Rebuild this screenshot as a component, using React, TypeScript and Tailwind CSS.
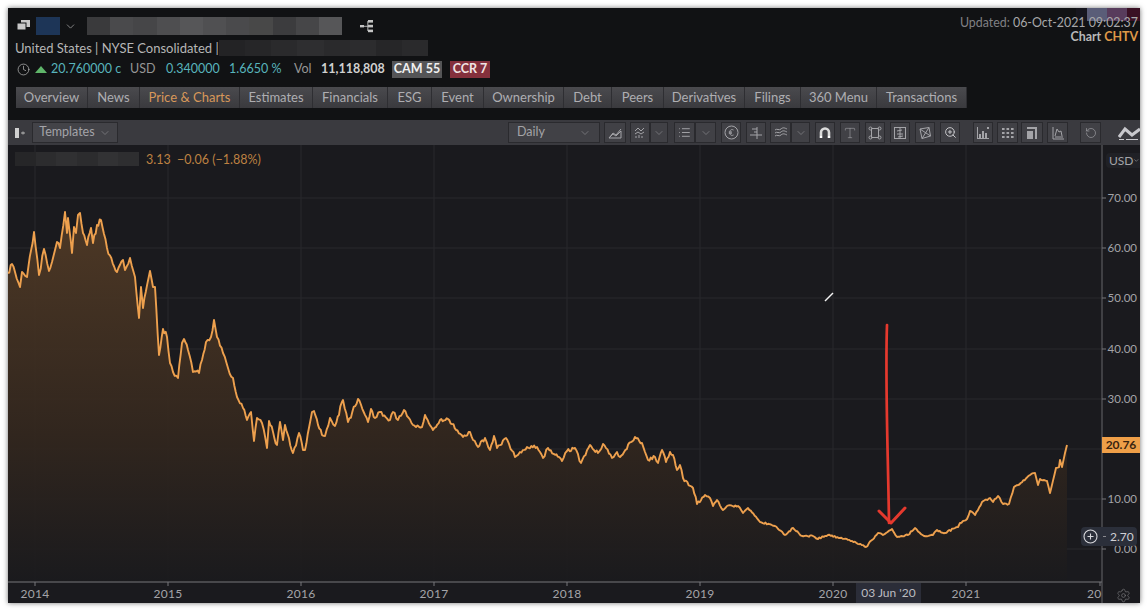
import React from 'react';
import { ChevronDown, Clock, RotateCcw, Settings, Type, ZoomIn, List } from 'lucide-react';

// Price line traced from the chart, in page coordinates
const PRICE: [number, number][] = [
  [8,273],[12,264],[15,272],[20,287],[22,272],[27,277],[34,232],[39,275],[44,249],[49,271],[55,250],[57,242],[60,248],[65,212],[67,233],[68,218],[72,253],[74,227],[76,233],[78,215],[80,213],[83,233],[87,245],[91,228],[93,243],[97,225],[101,220],[107,248],[117,272],[123,260],[125,270],[130,258],[135,277],[139,318],[141,287],[143,308],[150,271],[153,287],[155,287],[159,355],[163,329],[167,337],[170,363],[173,372],[178,378],[182,343],[184,339],[188,350],[193,372],[199,373],[202,360],[206,342],[211,337],[214,320],[217,337],[223,353],[228,368],[233,378],[237,397],[243,408],[247,420],[251,412],[254,441],[257,418],[262,423],[267,448],[269,421],[277,445],[280,422],[283,440],[285,425],[293,453],[299,433],[303,450],[305,450],[312,412],[314,411],[322,435],[325,436],[330,418],[335,426],[343,400],[348,422],[358,399],[368,422],[371,409],[375,418],[380,412],
  [390,420],[393,412],[398,420],[404,410],[413,425],[422,427],[425,415],[433,430],[440,420],[448,419],[463,437],[470,432],[473,440],[478,447],[485,438],[490,450],[494,436],[497,448],[506,438],[515,457],[520,452],[527,447],[537,447],[543,458],[548,448],[562,461],[567,451],[575,448],[581,463],[590,445],[598,453],[603,444],[612,458],[617,452],[620,457],[635,437],[642,443],[648,460],[655,457],[658,463],[662,450],[666,462],[670,452],[673,455],[677,470],[680,465],[683,478],[693,488],[697,504],[705,495],[710,498],[713,506],[717,500],[723,510],[727,506],[738,506],[743,513],[748,508],[760,522],[775,526],[785,535],[793,528],[802,536],
  [813,536],[818,539],[828,535],[840,538],[852,541],[866,547],[878,533],[883,535],[892,529],[897,537],[908,535],[915,528],[924,536],[933,535],[937,530],[945,533],[955,528],[958,527],[960,523],[967,519],[970,511],[975,515],[982,502],[990,498],[993,502],[998,496],[1003,504],[1009,504],[1014,487],[1018,485],[1030,475],[1035,473],[1038,485],[1040,479],[1047,481],[1050,493],[1056,468],[1059,467],[1060,460],[1062,467],[1065,453],[1067,445],
];

// Repeatable noise in -1..1
const noise = (v: number) => {
  const n = Math.sin(v * 12.9898) * 43758.5453;
  return (n - Math.floor(n)) * 2 - 1;
};

// Subdivide the trace and add a little daily noise
const buildLine = () => {
  const out: string[] = [];
  PRICE.forEach(([x, y], i) => {
    const next = PRICE[i + 1];
    out.push(`${x},${y}`);
    if (!next) return;
    const steps = Math.floor((next[0] - x) / 1.3);
    for (let s = 1; s < steps; s++) {
      const t = s / steps;
      const px = x + (next[0] - x) * t;
      const amp = x < 380 ? 2.6 : x < 700 ? 1.8 : 0.9;
      const py = y + (next[1] - y) * t + noise(px) * amp;
      out.push(`${px.toFixed(1)},${py.toFixed(1)}`);
    }
  });
  return out.join(' L');
};

const LINE = 'M' + buildLine();
const AREA = `${LINE} L1067,582 L8,582 Z`;

const GRID_Y = [198, 248, 298, 349, 399, 449, 499, 549];
const Y_LABELS: [string, number][] = [['70.00', 198], ['60.00', 248], ['50.00', 298], ['40.00', 349], ['30.00', 399], ['10.00', 499], ['0.00', 549]];
const YEARS: [string, number][] = [['2014', 35], ['2015', 168], ['2016', 301], ['2017', 434], ['2018', 567], ['2019', 700], ['2020', 833], ['2021', 966]];

const TABS: [string, string][] = [
  ['Overview', 'w-[72px]'], ['News', 'w-[52px]'], ['Price & Charts', 'w-[100px]'], ['Estimates', 'w-[73px]'],
  ['Financials', 'w-[75px]'], ['ESG', 'w-[44px]'], ['Event', 'w-[52px]'], ['Ownership', 'w-[80px]'],
  ['Debt', 'w-[48px]'], ['Peers', 'w-[52px]'], ['Derivatives', 'w-[81px]'], ['Filings', 'w-[56px]'],
  ['360 Menu', 'w-[76px]'], ['Transactions', 'w-[90px]'],
];

const MOSAIC_A = ['bg-[#3a3a3c]', 'bg-[#4a4a4c]', 'bg-[#464648]', 'bg-[#4e4e50]', 'bg-[#565658]', 'bg-[#505052]', 'bg-[#4a4a4c]', 'bg-[#484848]', 'bg-[#3c3c3e]', 'bg-[#464648]', 'bg-[#565658]'];
const MOSAIC_B = ['bg-[#232325]', 'bg-[#262628]', 'bg-[#2a2a2c]', 'bg-[#2e2e30]', 'bg-[#2a2a2c]', 'bg-[#2c2c2e]', 'bg-[#262628]', 'bg-[#2a2a2c]'];
const MOSAIC_C = ['bg-[#262628]', 'bg-[#2c2c2e]', 'bg-[#303032]', 'bg-[#2c2c2e]', 'bg-[#323234]', 'bg-[#2e2e30]'];

const Mosaic: React.FC<{ shades: string[]; className: string }> = ({ shades, className }) => (
  <div className={`flex blur-[0.6px] ${className}`}>
    {shades.map((s, i) => <div key={i} className={`flex-1 ${s}`} />)}
  </div>
);

// Toolbar button frame
const Tool: React.FC<{ className: string; children: React.ReactNode }> = ({ className, children }) => (
  <div className={`flex h-[21px] items-center justify-center border border-[#2a2a2e] bg-[#414146] text-[#a4a4a8] ${className}`}>
    {children}
  </div>
);

const Caret = () => <ChevronDown size={12} strokeWidth={1.5} className="text-[#818186]" />;

const Glyph: React.FC<{ children: React.ReactNode }> = ({ children }) => (
  <svg width="14" height="14" viewBox="0 0 14 14" fill="none" stroke="currentColor" strokeWidth="1">{children}</svg>
);

const Tree = () => (
  <svg width="16" height="14" viewBox="0 0 16 14" fill="#c4c4c4" stroke="none">
    <rect x="0" y="6" width="4" height="2.4" />
    <rect x="4" y="6.8" width="4" height="0.9" />
    <rect x="7.4" y="2" width="0.9" height="10" />
    <rect x="8" y="1" width="5" height="2.6" />
    <rect x="8" y="5.8" width="5" height="2.6" />
    <rect x="8" y="10.6" width="5" height="2.6" />
  </svg>
);

const App: React.FC = () => (
  <div className="h-[612px] w-[1148px] overflow-hidden bg-white pb-[9px] pl-2 pr-2 pt-2 font-['Lato',sans-serif]">
    <div className="relative flex h-full flex-col bg-[#111214] shadow-[0_0_5px_rgba(0,0,0,0.55)]">
      {/* Smeared swatches in the top corner */}
      <div className="absolute right-0 top-0 flex h-[13px]">
        <div className="w-[11px] bg-[#16161e]" />
        <div className="w-[20px] bg-[#5a5d78]" />
        <div className="w-[20px] bg-[#583c5c]" />
        <div className="w-[13px] bg-[#3a1024]" />
      </div>

      {/* Instrument header */}
      <div className="flex justify-between pl-[7px] pt-2">
        <div className="flex flex-col">
          <div className="flex h-5 items-center">
            <svg width="14" height="12" viewBox="0 0 14 12" className="ml-[2px]" fill="#c8c8c8">
              <rect x="4" y="0" width="9" height="7" />
              <rect x="0" y="3" width="9" height="7" stroke="#111214" />
            </svg>
            <div className="ml-[5px] h-[18px] w-6 bg-[#1d3557] blur-[0.5px]" />
            <ChevronDown size={13} strokeWidth={1.5} className="ml-1 text-[#9a9a9a]" />
            <Mosaic shades={MOSAIC_A} className="ml-[10px] h-[18px] w-[255px]" />
            <div className="ml-[18px]"><Tree /></div>
          </div>
          <div className="mt-[3px] flex h-[18px] items-center text-[13px] text-[#b6b6b6]">
            <span className="w-[204px] whitespace-nowrap pt-[2px]">United States | NYSE Consolidated |</span>
            <Mosaic shades={MOSAIC_B} className="h-4 w-[209px]" />
          </div>
          <div className="mt-[3px] flex h-[18px] items-center whitespace-nowrap pt-px text-[12.5px]">
            <Clock size={13} strokeWidth={1.4} className="ml-[2px] text-[#b0b0b0]" />
            <svg width="12" height="7" viewBox="0 0 12 7" className="ml-[5px]"><path d="M6 0 L12 7 L0 7 Z" fill="#5fb56a" /></svg>
            <span className="ml-1 w-[70px] text-[#58b4bc]">20.760000 c</span>
            <span className="ml-[9px] w-[26px] text-[#969696]">USD</span>
            <span className="ml-[10px] w-[52px] text-[#58b4bc]">0.340000</span>
            <span className="ml-[11px] w-[51px] text-[#58b4bc]">1.6650 %</span>
            <span className="ml-[14px] w-[18px] text-[#969696]">Vol</span>
            <span className="ml-[9px] w-[62px] font-bold text-[#d0d0d0]">11,118,808</span>
            <span className="ml-[9px] flex h-[17px] w-[50px] items-center justify-center bg-[#555557] font-bold text-[#f0f0f0]">CAM 55</span>
            <span className="ml-2 flex h-[17px] w-10 items-center justify-center bg-[#84303c] font-bold text-[#f0e4e4]">CCR 7</span>
          </div>
        </div>
        <div className="relative z-10 pr-[2px] text-right text-[12.4px] leading-[14px]">
          <div><span className="text-[#808084]">Updated: </span><span className="text-[#a8a8aa]">06-Oct-2021 09:02:37</span></div>
          <div className="font-bold text-[#b8b8b8]">Chart <span className="text-[#e09a48]">CHTV</span></div>
        </div>
      </div>

      {/* Section tabs */}
      <div className="ml-2 mt-[9px] flex h-[21px] self-start">
        {TABS.map(([label, width]) => (
          <div
            key={label}
            className={`flex items-center justify-center whitespace-nowrap border-r border-[#2e2e32] bg-gradient-to-b from-[#4a4a4e] to-[#3a3a3e] text-[13px] ${width} ${label === 'Price & Charts' ? 'text-[#d8985a]' : 'text-[#aeaeb2]'}`}
          >
            {label}
          </div>
        ))}
      </div>

      {/* Chart toolbar */}
      <div className="mt-3 flex h-[25px] items-center bg-[#3a3a3f]">
        <div className="flex w-6 items-center justify-center">
          <svg width="10" height="10" viewBox="0 0 10 10"><rect x="0" y="0" width="4" height="10" fill="#d0d0d0" /><path d="M6 5h4M8 3.5v3" stroke="#b0b0b0" strokeWidth="1" /></svg>
        </div>
        <Tool className="w-[86px] gap-1 bg-[#434348] text-[12.5px]">
          <span>Templates</span><Caret />
        </Tool>
        <Tool className="ml-[390px] w-[92px] px-2 text-[12.5px]">
          <span className="mr-auto">Daily</span><Caret />
        </Tool>
        <Tool className="ml-1 w-[22px]">
          <Glyph><path d="M1 12 L5 7 L8 9 L13 3 M1 12 H13 V5 L8 10 L5 8 Z" /></Glyph>
        </Tool>
        <Tool className="ml-1 w-5">
          <Glyph><path d="M2 5 L5 2 L8 5 L11 2 M2 8 L5 6 L8 8 L11 6 M3 12V10M6 12V9M9 12V10" /></Glyph>
        </Tool>
        <Tool className="w-[18px]"><Caret /></Tool>
        <Tool className="ml-[6px] w-[21px]"><List size={13} strokeWidth={1.8} /></Tool>
        <Tool className="w-[21px]"><Caret /></Tool>
        <Tool className="ml-[5px] w-5">
          <svg width="15" height="15" viewBox="0 0 15 15" fill="none" stroke="currentColor" strokeWidth="1">
            <circle cx="7.5" cy="7.5" r="6.5" />
            <path d="M9.5 5 C7 3.8 5.8 5.5 5.8 7.5 C5.8 9.5 7 11.2 9.5 10 M4.8 7 H8 M4.8 8.2 H8" />
          </svg>
        </Tool>
        <Tool className="ml-[5px] w-5">
          <Glyph><path d="M3 3 H8 M5 6 H8 M1 9 H13 M8 1 V13" /></Glyph>
        </Tool>
        <Tool className="ml-1 w-[21px]">
          <Glyph><path d="M1 4 C3 2 5 5 7 3 S11 2 13 3 M1 7 C3 5 5 8 7 6 S11 5 13 6 M1 10 C3 8 5 11 7 9 S11 8 13 9" /></Glyph>
        </Tool>
        <Tool className="w-[19px]"><Caret /></Tool>
        <Tool className="ml-[5px] w-5">
          <svg width="14" height="14" viewBox="0 0 14 14" fill="none">
            <path d="M3 10 V6.5 a4 4 0 0 1 8 0 V10" stroke="#dcdcdc" strokeWidth="2.6" />
            <path d="M1.7 11 h2.6 M9.7 11 h2.6" stroke="#ffffff" strokeWidth="2" />
          </svg>
        </Tool>
        <Tool className="ml-[5px] w-5"><Type size={14} strokeWidth={1} /></Tool>
        <Tool className="ml-[5px] w-5">
          <Glyph><path d="M3.5 2.5 H10.5 V11.5 H3.5 Z" /><circle cx="2.5" cy="2.5" r="1.5" /><circle cx="11.5" cy="2.5" r="1.5" /><circle cx="2.5" cy="11.5" r="1.5" /><circle cx="11.5" cy="11.5" r="1.5" /></Glyph>
        </Tool>
        <Tool className="ml-[5px] w-5">
          <Glyph><rect x="1.5" y="1.5" width="11" height="11" /><path d="M7 1.5 V12.5 M4 8 H10 M4 5 L9 4 M5 11 L10 10" /></Glyph>
        </Tool>
        <Tool className="ml-[5px] w-5">
          <Glyph><path d="M2 3 L11 1.5 L12.5 10 L4 12.5 Z M2 3 L12.5 10 M11 1.5 L4 12.5" /></Glyph>
        </Tool>
        <Tool className="ml-[5px] w-5 text-[#c8c8cc]"><ZoomIn size={13} strokeWidth={1.8} /></Tool>
        <Tool className="ml-[13px] w-5">
          <svg width="14" height="14" viewBox="0 0 14 14" fill="currentColor"><path d="M1 1h1v11h11v1H1z" /><rect x="3" y="8" width="2" height="4" /><rect x="6" y="5" width="2" height="7" /><rect x="9" y="7" width="2" height="5" /><path d="M11 1h2v2h-2z" /></svg>
        </Tool>
        <Tool className="ml-1 w-[21px]">
          <svg width="12" height="10" viewBox="0 0 12 10" fill="currentColor">
            {[0, 4.5, 9].map(x => [0, 4, 8].map(y => <rect key={`${x}-${y}`} x={x} y={y} width="2.6" height="2" />))}
          </svg>
        </Tool>
        <Tool className="ml-[3px] w-[22px]">
          <svg width="14" height="14" viewBox="0 0 14 14" fill="currentColor"><path d="M2 1h10v12h-2V3H2z" /><rect x="2" y="5" width="6" height="8" /></svg>
        </Tool>
        <Tool className="ml-1 w-[21px]">
          <Glyph><path d="M2 1 V13 H13 M4 10 L6 3 L8 6 L10 5 L11 10 M4 11 H12" /></Glyph>
        </Tool>
        <Tool className="ml-3 w-[21px]"><RotateCcw size={12} strokeWidth={1.3} /></Tool>
        <div className="ml-[17px]">
          <svg width="22" height="14" viewBox="0 0 22 14" fill="none" stroke="#c8c8cc" strokeWidth="3">
            <path d="M1 11 L7 3 L14 9 L22 3" />
            <path d="M1 13.5 H6 M8 13.5 H20" strokeWidth="1" />
          </svg>
        </div>
      </div>

      {/* Chart */}
      <div className="relative min-h-0 flex-1 bg-[#1a1a1e]">
        <svg width="1132" height="458" viewBox="8 145 1132 458" className="block">
          <defs>
            <linearGradient id="priceFill" gradientUnits="userSpaceOnUse" x1="0" y1="212" x2="0" y2="582">
              <stop offset="0" stopColor="#523b26" />
              <stop offset="0.6" stopColor="#33271e" />
              <stop offset="1" stopColor="#1a1a1d" />
            </linearGradient>
          </defs>

          {GRID_Y.map(y => <line key={y} x1="8" x2="1102" y1={y} y2={y} stroke="#29292d" />)}
          {YEARS.map(([, x]) => <line key={x} x1={x} x2={x} y1="145" y2="582" stroke="#29292d" />)}

          <path d={AREA} fill="url(#priceFill)" opacity="0.92" />
          <path d={LINE} fill="none" stroke="#eda04e" strokeWidth="1.9" strokeLinejoin="round" className="blur-[0.3px]" />

          {/* Hand-drawn annotation */}
          <path d="M887 325 C885 380 888 450 889 523" fill="none" stroke="#e5392e" strokeWidth="2.7" strokeLinecap="round" />
          <path d="M879 511 L891 523 L905 508" fill="none" stroke="#e5392e" strokeWidth="3" strokeLinecap="round" strokeLinejoin="round" />
          <line x1="825" y1="301" x2="833" y2="293" stroke="#f4f4f4" strokeWidth="1.5" />

          {/* Axes */}
          <line x1="8" x2="1102" y1="582" y2="582" stroke="#77777b" />
          <line x1="1102" x2="1102" y1="145" y2="603" stroke="#66666a" />
          {Y_LABELS.map(([label, y]) => (
            <g key={label}>
              <line x1="1102" x2="1106" y1={y} y2={y} stroke="#77777b" />
              <text x="1137" y={y + 4} fontSize="11.5" fill="#a4a4a8" textAnchor="end">{label}</text>
            </g>
          ))}
          {YEARS.map(([label, x]) => (
            <g key={label}>
              <line x1={x} x2={x} y1="582" y2="586" stroke="#77777b" />
              <text x={x} y="598" fontSize="12" fill="#a4a4a8" textAnchor="middle" letterSpacing="0.3">{label}</text>
            </g>
          ))}
          <line x1="1100" x2="1100" y1="582" y2="586" stroke="#77777b" />
          <text x="1087" y="598" fontSize="12" fill="#a4a4a8" letterSpacing="0.3">20</text>
        </svg>

        {/* Overlays on the plot */}
        <div className="absolute left-[7px] top-[7px] flex h-[14px] items-center text-[12.5px] text-[#bd8142]">
          <Mosaic shades={MOSAIC_C} className="h-[14px] w-[124px]" />
          <span className="ml-[7px] whitespace-nowrap pt-[2px]">3.13&nbsp;&nbsp;−0.06 (−1.88%)</span>
        </div>
        <div className="absolute right-0 top-[8px] flex h-[15px] w-[34px] items-center rounded-l-sm bg-[#202126] pl-[3px] text-[12px] text-[#a4a4a8]">
          USD<ChevronDown size={9} strokeWidth={2} />
        </div>
        <div className="absolute right-0 top-[292px] flex h-4 w-[38px] items-center justify-center bg-[#ef9f48] text-[12px] font-bold text-[#3a2410]">20.76</div>
        <div className="absolute right-[3px] top-[382px] flex h-[19px] w-[56px] items-center rounded-sm bg-[#2b2f3a] pl-[2px] text-[12px] text-[#d0d0d4]">
          <svg width="15" height="15" viewBox="0 0 15 15" fill="none" stroke="#d8d8dc" strokeWidth="1.1">
            <circle cx="7.5" cy="7.5" r="6.5" />
            <path d="M4.5 7.5 H10.5 M7.5 4.5 V10.5" />
          </svg>
          <span className="ml-[5px] h-px w-[3px] bg-[#8a8a90]" />
          <span className="ml-[4px]">2.70</span>
        </div>
        <div className="absolute bottom-0 left-[848px] flex h-5 w-[65px] items-center justify-center bg-[#2b2d38] text-[12px] text-[#bcbcc0]">03 Jun '20</div>
        <div className="absolute bottom-[0px] right-[9px] text-[#77777b]"><Settings size={15} strokeWidth={1.1} /></div>
      </div>
    </div>
  </div>
);

export default App;
